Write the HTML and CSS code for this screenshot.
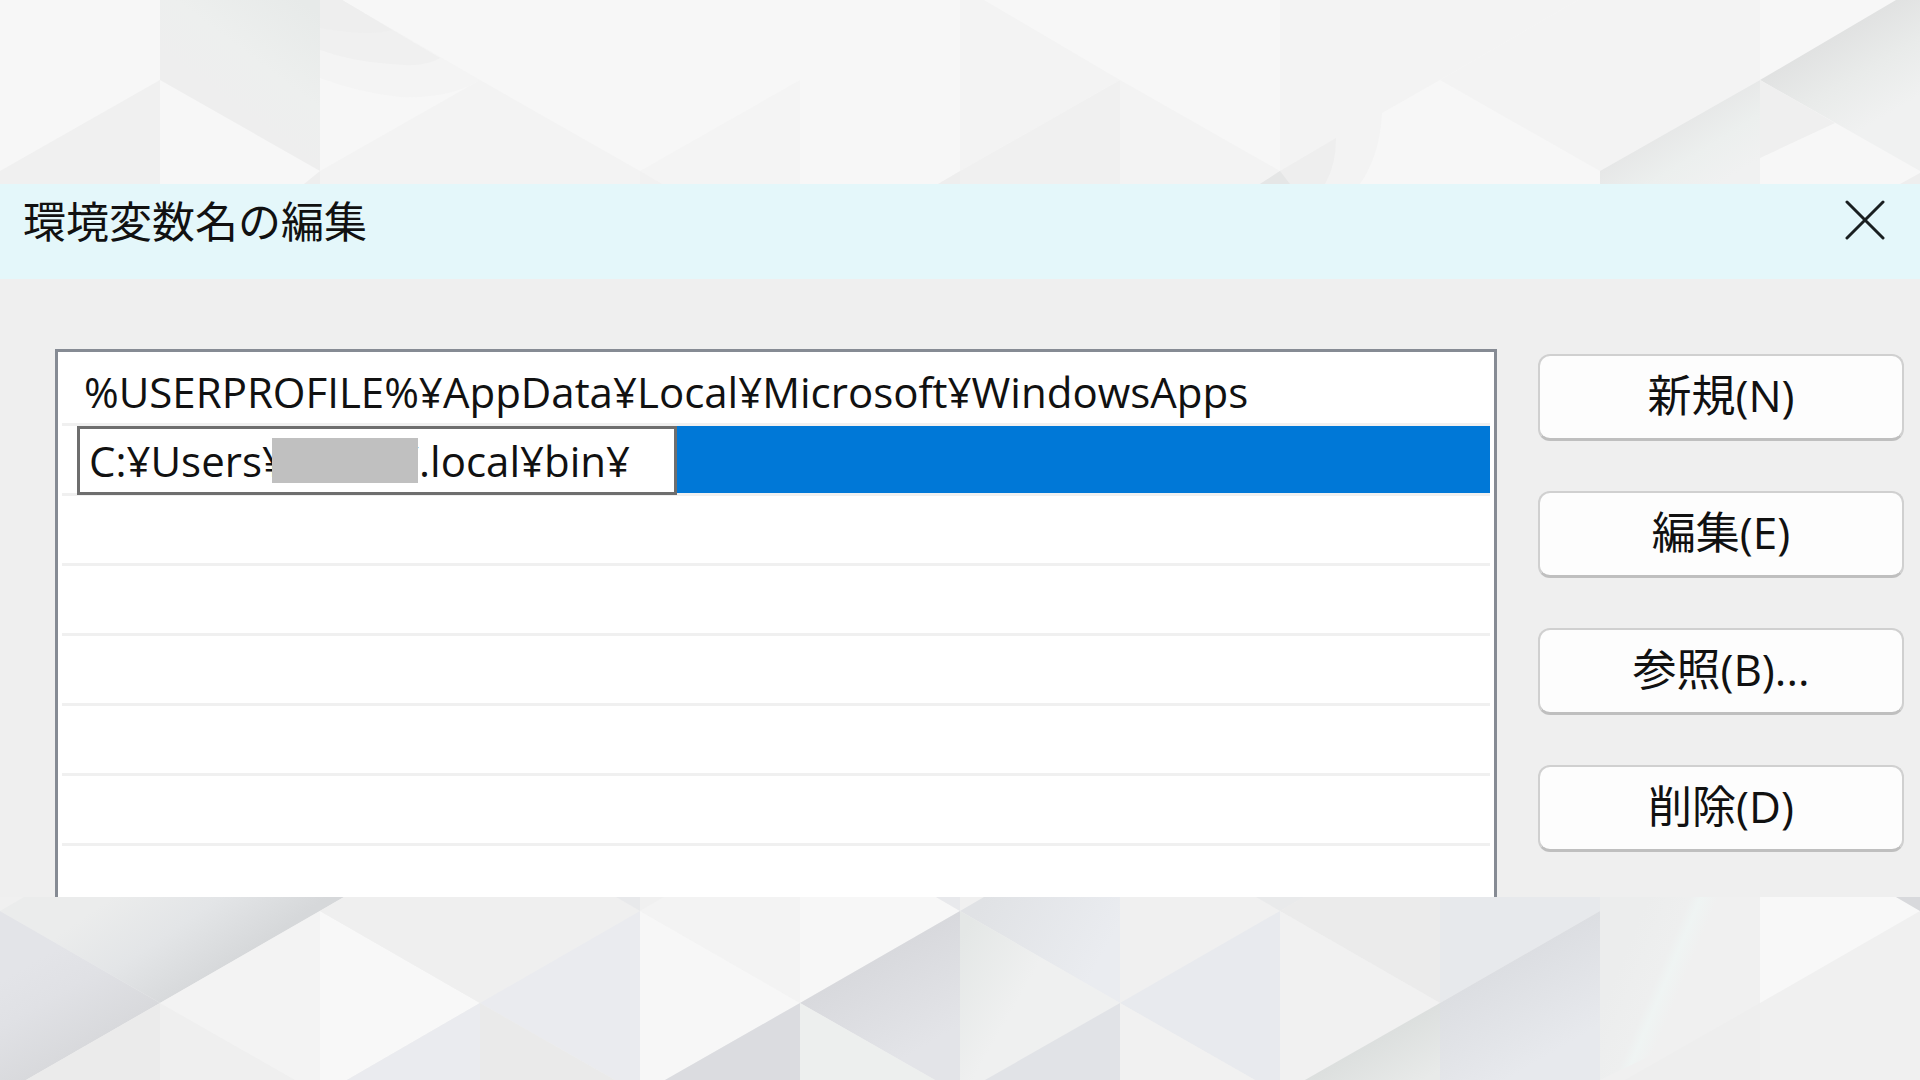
FILE: index.html
```html
<!DOCTYPE html>
<html lang="ja">
<head>
  <meta charset="UTF-8">
  <title>環境変数名の編集</title>
  <link rel="stylesheet" href="styles.css">
</head>
<body>

<svg class="pattern pattern-top" viewBox="0 0 1920 184" preserveAspectRatio="none" aria-hidden="true">
  <defs>
    <linearGradient id="column" gradientUnits="userSpaceOnUse" x1="225" y1="100" x2="300" y2="0">
      <stop offset="0" stop-color="#eeeeee"/>
      <stop offset="0.4" stop-color="#edefee"/>
      <stop offset="1" stop-color="#e7eae9"/>
    </linearGradient>
    <linearGradient id="corner" gradientUnits="userSpaceOnUse" x1="1820" y1="40" x2="1870" y2="125">
      <stop offset="0" stop-color="#e0e1e1"/>
      <stop offset="0.5" stop-color="#e9ebea"/>
      <stop offset="1" stop-color="#f0f1f1"/>
    </linearGradient>
    <linearGradient id="cornerLow" gradientUnits="userSpaceOnUse" x1="1680" y1="120" x2="1720" y2="184">
      <stop offset="0" stop-color="#e6e7e7"/>
      <stop offset="0.5" stop-color="#ecefee"/>
      <stop offset="1" stop-color="#f0f1f1"/>
    </linearGradient>
  </defs>
  <rect width="1920" height="184" fill="#f7f7f7"/>
  <polygon points="160,0 320,0 320,171 160,80" fill="url(#column)"/>
  <path d="M320 0H342L480 80Q450 99 400 97Q360 93 320 78Z" fill="#f4f4f4"/>
  <path d="M320 0H342L440 58Q425 68 390 64Q350 61 320 50Z" fill="#f0f0f0"/>
  <path d="M320 0H342L392 30Q370 37 320 28Z" fill="#eeeeee"/>
  <polygon points="0,171 160,80 160,184 0,184" fill="#f0f0f0"/>
  <polygon points="320,171 480,80 640,171 640,184 320,184" fill="#f3f3f3"/>
  <polygon points="304,184 320,171 320,184" fill="#eeeeee"/>
  <polygon points="640,171 800,80 800,184 640,184" fill="#f4f4f4"/>
  <polygon points="640,171 662,184 640,184" fill="#f1f1f1"/>
  <polygon points="938,184 960,171 960,184" fill="#eeeeee"/>
  <polygon points="960,0 984,0 1120,80 960,171" fill="#f3f3f3"/>
  <polygon points="960,171 1120,80 1120,184 960,184" fill="#f0f0f0"/>
  <polygon points="1120,80 1280,171 1280,184 1120,184" fill="#f3f3f3"/>
  <path d="M1280 0H1578L1440 80L1382 113Q1380 155 1360 184H1280Z" fill="#f3f3f3"/>
  <path d="M1260 184L1280 171L1336 138Q1336 165 1325 184Z" fill="#eeeeee"/>
  <polygon points="1260,184 1280,171 1290,184" fill="#e5e6e6"/>
  <polygon points="1440,80 1578,0 1760,0 1760,80 1600,171" fill="#f3f3f3"/>
  <polygon points="1600,171 1760,80 1760,184 1600,184" fill="url(#cornerLow)"/>
  <polygon points="1760,80 1896,0 1920,0 1920,171" fill="url(#corner)"/>
  <polygon points="1760,80 1835,123 1760,158" fill="#efefef"/>
  <polygon points="1900,184 1920,173 1920,184" fill="#eeeeee"/>
</svg>

<main class="dialog">
  <header class="title-bar">
    <h1>環境変数名の編集</h1>
    <button class="close" aria-label="閉じる">
      <svg viewBox="0 0 40 40" aria-hidden="true"><path d="M2 2L38 38M38 2L2 38"/></svg>
    </button>
  </header>

  <div class="content">
    <ul class="path-list">
      <li>%USERPROFILE%¥AppData¥Local¥Microsoft¥WindowsApps</li>
      <li class="selected">
        <div class="edit-box">
          <input type="text" aria-label="パス" value="C:¥Users¥          ¥.local¥bin¥">
          <span class="mask"></span>
        </div>
      </li>
      <li></li>
      <li></li>
      <li></li>
      <li></li>
      <li></li>
      <li></li>
    </ul>

    <div class="actions">
      <button>新規(N)</button>
      <button>編集(E)</button>
      <button>参照(B)...</button>
      <button>削除(D)</button>
    </div>
  </div>
</main>

<svg class="pattern pattern-bottom" viewBox="0 897 1920 183" preserveAspectRatio="none" aria-hidden="true">
  <defs>
    <linearGradient id="foldA" gradientUnits="userSpaceOnUse" x1="250" y1="951" x2="180" y2="850">
      <stop offset="0" stop-color="#d6d8da"/>
      <stop offset="0.5" stop-color="#e3e5e7"/>
      <stop offset="1" stop-color="#ebecec"/>
    </linearGradient>
    <linearGradient id="foldB" gradientUnits="userSpaceOnUse" x1="100" y1="1038" x2="50" y2="952">
      <stop offset="0" stop-color="#d8d9dc"/>
      <stop offset="0.6" stop-color="#e0e1e5"/>
      <stop offset="1" stop-color="#e3e4e8"/>
    </linearGradient>
    <linearGradient id="foldC" gradientUnits="userSpaceOnUse" x1="860" y1="969" x2="910" y2="1055">
      <stop offset="0" stop-color="#d8d9dd"/>
      <stop offset="1" stop-color="#e3e4e8"/>
    </linearGradient>
    <linearGradient id="foldD" gradientUnits="userSpaceOnUse" x1="985" y1="897" x2="1100" y2="960">
      <stop offset="0" stop-color="#e0e2e5"/>
      <stop offset="1" stop-color="#eaecf0"/>
    </linearGradient>
    <linearGradient id="foldE" gradientUnits="userSpaceOnUse" x1="1480" y1="980" x2="1530" y2="1066">
      <stop offset="0" stop-color="#dcdee2"/>
      <stop offset="1" stop-color="#e7e9ed"/>
    </linearGradient>
    <linearGradient id="foldF" gradientUnits="userSpaceOnUse" x1="1370" y1="1042" x2="1400" y2="1094">
      <stop offset="0" stop-color="#dcdfde"/>
      <stop offset="1" stop-color="#e8eae9"/>
    </linearGradient>
    <linearGradient id="foldG" gradientUnits="userSpaceOnUse" x1="960" y1="940" x2="1030" y2="980">
      <stop offset="0" stop-color="#e4e7e6"/>
      <stop offset="1" stop-color="#eff0f0"/>
    </linearGradient>
    <linearGradient id="streak" gradientUnits="userSpaceOnUse" x1="1630" y1="940" x2="1690" y2="965">
      <stop offset="0" stop-color="#eceded"/>
      <stop offset="0.6" stop-color="#eeefef"/>
      <stop offset="0.75" stop-color="#eff4f3"/>
      <stop offset="1" stop-color="#f0f0f0"/>
    </linearGradient>
  </defs>
  <rect y="897" width="1920" height="183" fill="#f0f0f0"/>
  <polygon points="0,911 24,897 344,897 160,1003" fill="url(#foldA)"/>
  <polygon points="0,911 160,1003 26,1080 0,1080" fill="url(#foldB)"/>
  <polygon points="160,1003 160,1080 26,1080" fill="#ebebeb"/>
  <polygon points="160,1003 295,1080 160,1080" fill="#efefef"/>
  <polygon points="320,911 160,1003 295,1080 320,1080" fill="#f3f3f3"/>
  <polygon points="320,911 480,1003 347,1080 320,1080" fill="#f8f8f8"/>
  <polygon points="320,911 344,897 616,897 640,911 480,1003" fill="#efefef"/>
  <polygon points="616,897 640,897 640,911" fill="#e8e9eb"/>
  <polygon points="640,911 480,1003 615,1080 640,1080" fill="#eaebef"/>
  <polygon points="480,1003 347,1080 480,1080" fill="#eaebef"/>
  <polygon points="480,1003 615,1080 480,1080" fill="#eaeaea"/>
  <polygon points="640,911 664,897 800,897 800,1003" fill="#f3f3f3"/>
  <polygon points="640,911 800,1003 665,1080 640,1080" fill="#f7f7f7"/>
  <polygon points="800,897 936,897 960,911 800,1003" fill="#f7f7f7"/>
  <polygon points="936,897 960,897 960,911" fill="#e8e9ec"/>
  <polygon points="960,911 960,1080 935,1080 800,1003" fill="url(#foldC)"/>
  <polygon points="800,1003 800,1080 665,1080" fill="#dbdce0"/>
  <polygon points="800,1003 935,1080 800,1080" fill="#edefee"/>
  <polygon points="960,911 984,897 1120,897 1120,1003" fill="url(#foldD)"/>
  <polygon points="960,911 1120,1003 985,1080 960,1080" fill="url(#foldG)"/>
  <polygon points="985,1080 1120,1003 1120,1080" fill="#e1e3e7"/>
  <polygon points="1120,1003 1280,911 1280,1080 1255,1080" fill="#e8eaee"/>
  <polygon points="1256,897 1304,897 1280,911" fill="#e9eaeb"/>
  <polygon points="1120,1003 1255,1080 1120,1080" fill="#f1f1f1"/>
  <polygon points="1280,911 1304,897 1440,897 1440,1003" fill="#ebebeb"/>
  <polygon points="1280,911 1440,1003 1305,1080 1280,1080" fill="#f1f1f1"/>
  <polygon points="1440,897 1600,897 1600,911 1440,1003" fill="#e7e9ec"/>
  <polygon points="1440,1003 1440,1080 1305,1080" fill="url(#foldF)"/>
  <polygon points="1440,1003 1600,911 1600,1080 1440,1080" fill="url(#foldE)"/>
  <polygon points="1600,897 1760,897 1760,1003 1600,1080" fill="url(#streak)"/>
  <polygon points="1760,1003 1760,1080 1625,1080" fill="#eeeeee"/>
  <polygon points="1760,897 1896,897 1920,911 1760,1003" fill="#f8f8f8"/>
  <polygon points="1896,897 1920,897 1920,911" fill="#d8d9dc"/>
</svg>

</body>
</html>
```
FILE: styles.css
```css
* {
  box-sizing: border-box;
}
body {
  margin: 0;
  height: 100vh;
  display: flex;
  flex-direction: column;
  overflow: hidden;
  font-family: "Open Sans", "Noto Sans CJK JP", sans-serif;
  font-size: 42px;
  color: #111;
}
.pattern {
  display: block;
  width: 100%;
  flex: none;
}
.pattern-top {
  height: 184px;
}
.pattern-bottom {
  height: 183px;
}

.dialog {
  flex: 1;
  min-height: 0;
  display: flex;
  flex-direction: column;
  background: #efefef;
  overflow: hidden;
}
.title-bar {
  flex: none;
  display: flex;
  justify-content: space-between;
  align-items: flex-start;
  height: 95px;
  padding: 6px 35px 0 23px;
  background: #e4f7fa;
}
.title-bar h1 {
  margin: 0;
  font-family: "Noto Sans CJK JP", sans-serif;
  font-size: 43px;
  font-weight: 400;
  line-height: 58px;
}
.close {
  margin-top: 10px;
  padding: 0;
  border: none;
  background: none;
}
.close svg {
  display: block;
  width: 40px;
  height: 40px;
  fill: none;
  stroke: #1a1f20;
  stroke-width: 3;
  stroke-linecap: round;
}

.content {
  flex: 1;
  min-height: 0;
  display: flex;
  gap: 41px;
  padding: 70px 16px 0 55px;
}
.path-list {
  flex: 1;
  min-width: 0;
  margin: 0;
  padding: 4px 4px 0;
  list-style: none;
  background: #fff;
  border: 3px solid #868b94;
  border-bottom: none;
  overflow: hidden;
}
.path-list li {
  height: 70px;
  padding-left: 22px;
  border-bottom: 3px solid #f0f0f0;
  line-height: 72px;
  white-space: nowrap;
}
.path-list .selected {
  padding-left: 15px;
  background: #0078d7;
  background-clip: content-box;
}
.edit-box {
  position: relative;
  width: 600px;
  height: 69px;
}
.edit-box input {
  display: block;
  width: 100%;
  height: 100%;
  padding: 0 9px;
  border: 3px solid #6e6e6e;
  border-radius: 0;
  outline: none;
  background: #fff;
  color: inherit;
  font: inherit;
}
/* hides the user name */
.mask {
  position: absolute;
  left: 195px;
  top: 12px;
  width: 146px;
  height: 45px;
  background: #c0c0c0;
}

.actions {
  flex: none;
  width: 366px;
  display: flex;
  flex-direction: column;
  gap: 50px;
  padding-top: 5px;
}
.actions button {
  flex: none;
  height: 87px;
  padding: 0 0 8px;
  border: 2px solid #d0d0d0;
  border-bottom: 3px solid #bfbfbf;
  border-radius: 12px;
  background: #fdfdfd;
  color: inherit;
  font: inherit;
  font-size: 44px;
}
```
